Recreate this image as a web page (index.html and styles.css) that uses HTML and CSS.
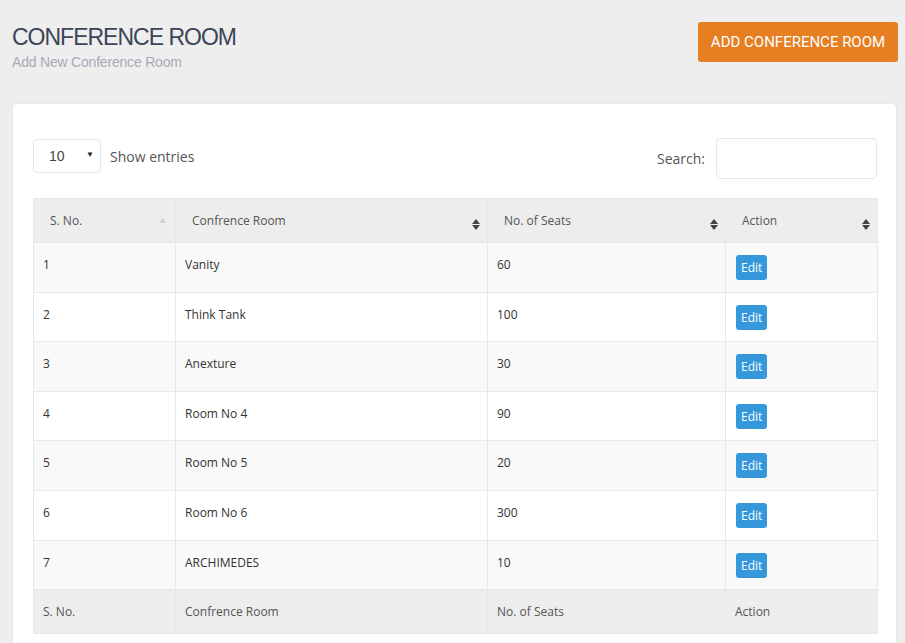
FILE: index.html
```html
<!DOCTYPE html>
<html>
<head>
<meta charset="utf-8">
<link rel="stylesheet" href="styles.css">
</head>
<body>
<div class="page-head">
  <div class="titles">
    <h1 class="title">CONFERENCE ROOM</h1>
    <div class="subtitle">Add New Conference Room</div>
  </div>
  <button class="btn-add">ADD CONFERENCE ROOM</button>
</div>
<div class="card">
  <div class="toolbar">
    <div class="length">
      <div class="select"><span>10</span><span class="caret">&#9660;</span></div>
      <span class="label">Show entries</span>
    </div>
    <div class="search">
      <span class="label">Search:</span>
      <div class="search-input"></div>
    </div>
  </div>
  <table class="grid">
    <colgroup>
      <col class="c1"><col class="c2"><col class="c3"><col class="c4">
    </colgroup>
    <thead>
      <tr>
        <th class="first"><span>S. No.</span><span class="sort-up">&#9650;</span></th>
        <th><span>Confrence Room</span><span class="sort"><i class="up"></i><i class="down"></i></span></th>
        <th><span>No. of Seats</span><span class="sort"><i class="up"></i><i class="down"></i></span></th>
        <th><span>Action</span><span class="sort"><i class="up"></i><i class="down"></i></span></th>
      </tr>
    </thead>
    <tbody>
      <tr class="odd"><td>1</td><td>Vanity</td><td>60</td><td><span class="edit">Edit</span></td></tr>
      <tr><td>2</td><td>Think Tank</td><td>100</td><td><span class="edit">Edit</span></td></tr>
      <tr class="odd"><td>3</td><td>Anexture</td><td>30</td><td><span class="edit">Edit</span></td></tr>
      <tr><td>4</td><td>Room No 4</td><td>90</td><td><span class="edit">Edit</span></td></tr>
      <tr class="odd"><td>5</td><td>Room No 5</td><td>20</td><td><span class="edit">Edit</span></td></tr>
      <tr><td>6</td><td>Room No 6</td><td>300</td><td><span class="edit">Edit</span></td></tr>
      <tr class="odd"><td>7</td><td>ARCHIMEDES</td><td>10</td><td><span class="edit">Edit</span></td></tr>
    </tbody>
    <tfoot>
      <tr><td>S. No.</td><td>Confrence Room</td><td>No. of Seats</td><td>Action</td></tr>
    </tfoot>
  </table>
</div>
</body>
</html>
```

FILE: styles.css
```css
* { box-sizing: border-box; }
html, body { margin: 0; padding: 0; }
body {
  background: #eeeeee;
  font-family: "Open Sans", sans-serif;
  width: 905px;
  height: 643px;
  overflow: hidden;
}
.page-head {
  display: flex;
  justify-content: space-between;
  align-items: flex-start;
  padding: 22px 7px 0 12px;
  height: 103px;
}
.title {
  margin: 0;
  padding-top: 1px;
  font-family: "Liberation Sans", Arial, sans-serif;
  font-weight: normal;
  font-size: 23px;
  line-height: 28px;
  color: #3b4556;
  letter-spacing: -1px;
}
.subtitle {
  font-family: "Liberation Sans", Arial, sans-serif;
  font-size: 14px;
  line-height: 18px;
  margin-top: 2px;
  color: #a9a9b6;
  letter-spacing: -0.2px;
}
.btn-add {
  width: 200px;
  height: 40px;
  background: #e67e22;
  border: none;
  border-radius: 3px;
  color: #fff;
  font-family: Roboto, "Liberation Sans", sans-serif;
  font-size: 15px;
  padding: 0;
}
.card {
  margin: 0 8px 0 12px;
  background: #fff;
  border: 1px solid #e3e9ee;
  border-radius: 4px;
  padding: 34px 19px 0 20px;
  height: 560px;
}
.toolbar {
  display: flex;
  justify-content: space-between;
  align-items: flex-start;
  height: 41px;
  margin-bottom: 19px;
}
.length { display: flex; align-items: center; margin-top: 1px; }
.select {
  width: 68px;
  height: 34px;
  border: 1px solid #e3e9ee;
  border-radius: 4px;
  display: flex;
  align-items: center;
  justify-content: space-between;
  padding: 0 6px 0 15px;
  font-family: "Liberation Sans", Arial, sans-serif;
  font-size: 14px;
  color: #444;
}
.caret { font-size: 8px; color: #222; margin-top: -4px; }
.label { font-size: 14px; color: #555; }
.length .label { margin-left: 9px; }
.search { display: flex; align-items: center; }
.search .label { margin-right: 1px; }
.search-input {
  width: 161px;
  height: 41px;
  margin-left: 10px;
  border: 1px solid #e3e9ee;
  border-radius: 4px;
}
.grid {
  width: 844px;
  border-collapse: collapse;
  table-layout: fixed;
  font-size: 12px;
  color: #333;
}
.c1 { width: 142px; }
.c2 { width: 312px; }
.c3 { width: 238px; }
.c4 { width: 152px; }
.grid th, .grid td {
  border: 1px solid #e3e9f0;
  text-align: left;
  font-weight: normal;
}
.grid thead th {
  background: #ededed;
  height: 44px;
  padding: 13px 10px 0 16px;
  color: #555;
  position: relative;
  vertical-align: top;
}
.sort-up {
  position: absolute;
  right: 8px;
  top: 14px;
  font-size: 9px;
  color: #cfcfcf;
}
.sort {
  position: absolute;
  right: 7px;
  top: 20px;
  display: flex;
  flex-direction: column;
  gap: 1px;
}
.sort i { width: 0; height: 0; border-left: 4px solid transparent; border-right: 4px solid transparent; display: block; }
.sort .up { border-bottom: 5px solid #444; }
.sort .down { border-top: 5px solid #444; }
.grid tbody td {
  height: 49.6px;
  padding: 13px 9px 0 9px;
  vertical-align: top;
  line-height: 17px;
  color: #333;
}
.grid tbody tr.odd td { background: #f9f9f9; }
.edit {
  display: inline-block;
  background: #3498db;
  color: #fff;
  font-size: 12px;
  line-height: 25px;
  height: 25px;
  padding: 0 5px;
  border-radius: 3px;
  margin-left: 1px;
  margin-top: -1px;
}
.grid tfoot td {
  background: #ededed;
  height: 44px;
  padding: 0 9px;
  color: #555;
}
```
